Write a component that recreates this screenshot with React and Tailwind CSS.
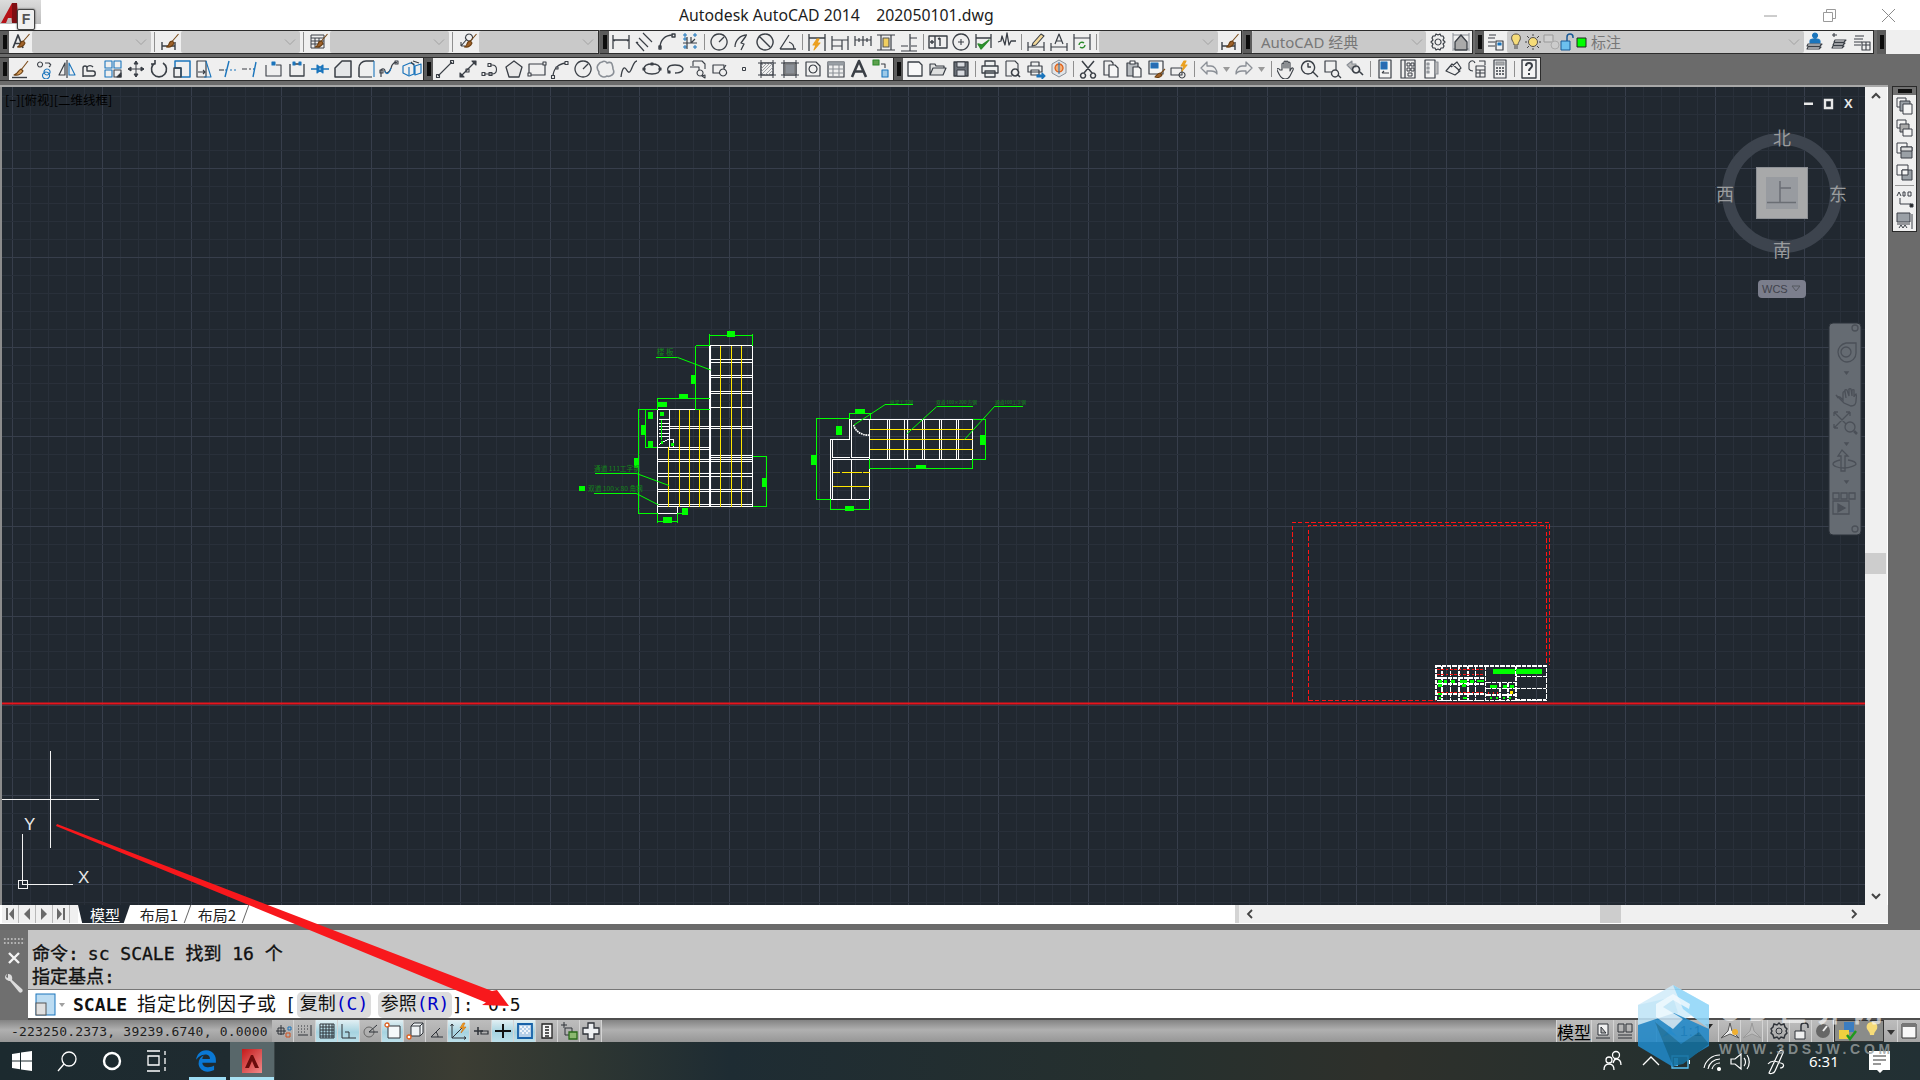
import React from 'react';
import { FaEdgeLegacy } from 'react-icons/fa6';

const K = '#3a3f46', B = '#1b75bc', O = '#e0651f', G = '#2b8a2b', Y = '#e8a020', N = '#8a8f96';
const BR = [['#7a4a18', 'M18.5 2l-6 7'], ['#6b3f12', 'M12.5 9c-2 0-3 1-3.500 3-.3 1.500-1 2-2.500 3 3 .5 6-.5 7.500-4z', '#a0622a']];
const ic = {
  textB: [[K, 'M2 16L7 3l5 13M4 11.500h6', null, 1.7], ...BR],
  dimB: [[K, 'M2 10v8M15 10v8M2 14h13', null, 1.4], ...BR],
  tableB: [[K, 'M2 3h13v13H2zM2 6h13M2 9h13M2 12h13M6 6v10M10 6v10', null, 1], ...BR],
  mlB: [[K, 'M11 2a3.500 3.500 0 1 0 .1 0M9 7L3 14M3 14v-4M3 14h4'], ...BR],
  match: [['#7a4a18', 'M17 2l-7 9'], ['#6b3f12', 'M10 10c-2 1-3 3-4 4-1 .8-2 1.500-3 2 3 .5 7-.5 9-4z', '#d9a05c'], [K, 'M1 18.500h15', null, 1.4]],
  copy2: [[K, 'M6 3a2.500 2.500 0 1 0 .1 0M11 4h4l2 2M15 8l2-2'], [B, 'M13 10a3 3 0 1 0 .1 0M12 13a3.500 3.500 0 1 0 .1 0']],
  mirror: [[K, 'M2 16L8 4v12zM10 1v18', null, 1.2], [B, 'M12 4l6 12h-6z']],
  offset: [[K, 'M3 18V9a2 2 0 0 1 4 0v3h6c3 0 3 5 0 5H3M7 10V8a4 4 0 0 1 6 0', null, 1.4]],
  array: [[B, 'M2 2h7v7H2zM11 2h7v7h-7zM2 11h7v7H2z'], [K, 'M11 11h7v7h-7z'], [K, 'M14 18l4-4v4z', '#222']],
  move: [[K, 'M10 2v16M2 10h16M10 2L8 5h4zM10 18l-2-3h4zM2 10l3-2v4zM18 10l-3-2v4z', '#3a3f46', 1]],
  rotate: [[K, 'M14 4a7.500 7.500 0 1 1-8 0M6 1v4H2', null, 1.6]],
  scale: [[B, 'M3 2h15v16H9V9H3z', null, 1.5], [K, 'M2 9h7v9H2z', null, 1.4]],
  stretch: [[K, 'M2 2h9v16H2z', null, 1.2], [B, 'M11 2l5 16H9'], [K, 'M3 13h7M8 11l2 2-2 2']],
  trim: [[K, 'M1 11h5'], [B, 'M7 11h2M12 11h2M16 11h2'], [B, 'M11 2L7 18', null, 1.4]],
  extend: [[K, 'M1 10h5M8 10h2'], [B, 'M15 3l-3 15M12 10h1', null, 1.4]],
  breakPt: [[K, 'M2 6v11h15V6h-5'], [B, 'M8 3h3v3H8z', '#1b75bc']],
  breakL: [[K, 'M3 5v12h14V5M8 5h4', null, 1.3], [B, 'M6 3h2v3H6zM12 3h2v3h-2z', '#1b75bc']],
  join: [[B, 'M1 10h6M13 10h6', null, 1.4], [B, 'M7 6l5 4-5 4zM13 6l-5 4 5 4z', '#1b75bc']],
  chamfer: [[K, 'M2 9v9h16V2h-9z', '#e4e6e8', 1.5]],
  fillet: [[K, 'M3 18V9a7 7 0 0 1 7-7h8', null, 1.5], [K, 'M3 18h13'], [B, 'M18 2v16']],
  blend: [[K, 'M2 18v-6c0-3 4-3 4 0 0 3 4 3 6-3 1-4 4-7 6-5', null, 1.2], [B, 'M6 12c1 5 5 2 6-3'], [K, 'M1 11h3v3H1zM16 2h3v3h-3z']],
  explode: [[B, 'M1 7l7-3 4 1v10l-5 2-6-3zM7 8v8M13 7l6-2v9l-6 2z', null, 1.2], [K, 'M9 3l3 3M11 2l6 2']],
  line: [[K, 'M3 17L17 3M1.500 15.500h3v3h-3zM15.500 1.500h3v3h-3z']],
  xline: [[K, 'M3 17L17 3', null, 1.2], [K, 'M14 2h4v4zM2 14v4h4z', '#3a3f46'], [K, 'M8 10h3v3H8z']],
  pline: [[K, 'M3 15h8c6 0 6-9 0-9H9M1 13.500h3v3H1zM8 13.500h3v3H8zM7 4.500h3v3H7z']],
  polygon: [[K, 'M10 2l8 6-3 10H5L2 8z', '#e8e8e8', 1.3]],
  rect: [[K, 'M2 5h16v11H2z', null, 1.2], [K, 'M1 14h3v3H1zM16 3h3v3h-3z', '#efefef']],
  arc: [[K, 'M3 18c0-8 5-13 13-14', null, 1.3], [K, 'M1.500 16.500h3v3h-3zM15 2.500h3v3h-3zM6 8h2v2H6z', '#efefef']],
  circle: [[K, 'M10 2a8 8 0 1 0 .1 0M10 10l5-5', null, 1.3]],
  cloud: [[N, 'M6 3c3-2 5 1 5 1s4-2 5 1 1 5 1 5 2 4-1 6-5 1-5 1-3 2-6 0-2-4-2-4-3-4-1-7 4-3 4-3z', null, 1.6]],
  spline: [[K, 'M2 18c1-8 3-11 5-8s3 5 5 1 3-9 6-9', null, 1.3]],
  ellipse: [[K, 'M10 5c-5 0-8 2-8 5s3 5 8 5 8-2 8-5-3-5-8-5z', null, 1.3], [K, 'M1 9h2v2H1zM17 9h2v2h-2zM9 4h2v2H9z', '#3a3f46']],
  ellarc: [[K, 'M5 14c-4-3-3-8 5-8s9 4 7 6-7 2-7 2', null, 1.3], [K, 'M3 12h2v2H3z', '#3a3f46']],
  insert: [[K, 'M5 2h9l3 3v5M5 2v5M2 8h9v6', null, 1.1], [K, 'M12 11a3 3 0 1 0 .1 0M14 17l3 2v-3z', '#efefef']],
  mkblock: [[K, 'M2 6h11v8H2z', null, 1.2], [K, 'M12 10a3.500 3.500 0 1 0 .1 0M13 9l2-3', '#efefef']],
  point: [[K, 'M8.500 8.500h3v3h-3z', null, 1]],
  hatch: [[K, 'M4 4h12v12H4zM1 4h18M1 16h18M4 1v18M16 1v18', null, 1], [N, 'M4 7l3-3M4 10l6-6M4 13l9-9M5 15l11-11M8 16l8-8M11 16l5-5', null, .8]],
  gradient: [[K, 'M4 4h12v12H4zM1 4h18M1 16h18M4 1v18M16 1v18', null, 1], ['#777', 'M5 5h10v10H5z', '#8a8f96']],
  region: [[K, 'M3 3h10l4 4v10H3z', '#f0f0f0', 1.2], [K, 'M10 6a4 4 0 1 0 .1 0', null, 1.2]],
  table: [[K, 'M2 3h16v15H2z', null, 1.2], [N, 'M2 3h16v3H2z', '#9aa0a6'], [N, 'M2 10h16M2 14h16M7 6v12M13 6v12']],
  textA: [[K, 'M3 18L10 2l7 16M5.500 12.500h9', null, 2.6]],
  addsel: [[G, 'M1 1h6v5H1z', '#5ea04e'], [K, 'M9 5h4v4'], [B, 'M10 11h6v7h-6z', '#9cc9e8']],
  new: [[K, 'M3 3h11l3 3v11H3z', '#f8f8f8', 1.3]],
  open: [[K, 'M2 16V5h5l1 2h8v2M2 16l3-7h13l-3 7z', '#dfe0e0', 1.2]],
  save: [[K, 'M3 3h14v14H3z', '#6a7078', 1.3], [K, 'M6 3h8v5H6zM6 11h8v6H6z', '#d8dbe0', 1]],
  plot: [[K, 'M5 7V2h10v5M2 7h16v7H2zM5 12h10v6H5z', '#eef0f0', 1.3]],
  preview: [[K, 'M3 2h9l3 3v6M3 2v15h6', null, 1.1], [K, 'M12 10a3.500 3.500 0 1 0 .1 0M14 15l3 3', null, 1.6]],
  publish: [[K, 'M5 7V3h8v4M2 7h14v6H2zM5 11h8v5H5z', '#eef0f0', 1.2], [B, 'M11 16h5v-2l3 3-3 3v-2h-5z', '#1b75bc']],
  model3d: [[N, 'M10 1l7 4v9l-7 4-7-4V5z', '#e0e4e8', 1], [O, 'M10 5a4 4 0 1 0 .1 0', '#f2b07a', 1.4], [B, 'M10 3v12', null, 1]],
  cut: [[K, 'M4 2l10 12M16 2L6 14M5 14a2.500 2.500 0 1 0 .1 0M15 14a2.500 2.500 0 1 0 .1 0', null, 1.5]],
  copy: [[K, 'M3 2h7l2 2v12H3z', '#efefef', 1.2], [K, 'M8 6h6l3 3v9H8z', '#f6f6f6', 1.2]],
  paste: [[K, 'M3 4h11v13H3z', '#b8bcc0', 1.2], [K, 'M6 2h5v3H6z', '#fff'], [K, 'M9 8h6l2 2v8H9z', '#f6f6f6', 1.2]],
  matchp: [[K, 'M2 2h14v13H2z', '#f4f4f4', 1.2], [B, 'M4 4h7v5H4z', '#2a6ab0'], ['#7a4a18', 'M18 10l-5 5'], ['#6b3f12', 'M13 14c-2 0-3 2-5 4 3 1 6 0 7-2z', '#a0622a']],
  blkedit: [[K, 'M1 9h11v7H1z', null, 1.1], [K, 'M12 13a3 3 0 1 0 .1 0'], [Y, 'M14 2l-3 5h3l-2 5 5-6h-3l2-4z', '#f0a020']],
  undo: [[N, 'M8 3L2 9l6 6v-3h4c3 0 5 1 6 3 0-5-3-8-6-8H8z', '#eee', 1.3]],
  redo: [[N, 'M12 3l6 6-6 6v-3H8c-3 0-5 1-6 3 0-5 3-8 6-8h4z', '#eee', 1.3]],
  pan: [[K, 'M5 11V5a1 1 0 0 1 2 0v4-6a1 1 0 0 1 2 0v6-6a1 1 0 0 1 2 0v6-5a1 1 0 0 1 2 0v8l1-2c1-2 3-1 2 1l-3 6c-1 2-3 3-5 3-4 0-5-3-6-5l-2-4c-.5-2 2-2 3 0z', '#efefef', 1.1]],
  zoomrt: [[K, 'M8 2a6.500 6.500 0 1 0 .1 0M8 4v4h3M13 13l5 5', null, 1.4]],
  zoomw: [[K, 'M2 2h11v11H2z', null, 1.2], [K, 'M12 11a3.500 3.500 0 1 0 .1 0M15 16l3 3', '#efefef', 1.3]],
  zoomp: [[N, 'M1 6l5-4v3h4v3H6v3z', '#bbb'], [K, 'M10 7a3.500 3.500 0 1 0 .1 0M13 12l4 4', null, 1.6]],
  props: [[K, 'M4 1h12v18H4z', '#f4f4f4', 1.2], [B, 'M6 3h6v7H6z', '#2a6ab0'], [K, 'M7 14h7M7 14l2-2'] ],
  dc: [[K, 'M3 1h14v18H3zM7 1v18', null, 1.2], [K, 'M9 4h3v3H9zM13 4h3v3h-3zM9 9h3v3H9zM13 9h3v3h-3zM10 14h4v3h-4z', null, 1]],
  palette: [[K, 'M4 1h10v18H4z', '#f4f4f4', 1.2], [N, 'M14 3h3v12h-3zM6 4h2v2H6zM6 8h2v2H6zM6 12h2v2H6z', '#bbb']],
  sheet: [[K, 'M2 12l6-7 8 7-5 4zM7 8l6-5 4 6-3 3', '#efefef', 1.2]],
  markup: [[K, 'M2 4c2-3 5-3 6 0M2 4v6c1 2 3 2 4 2M12 2h6v4', null, 1.1], [K, 'M9 7h9v11H9zM9 11h9M9 14h9M13 11v7', '#efefef', 1.1]],
  calc: [[K, 'M4 1h12v18H4z', '#efefef', 1.2], [N, 'M6 3h8v3H6z', '#aaa'], [K, 'M6 9h2M9 9h2M12 9h2M6 12h2M9 12h2M12 12h2M6 15h2M9 15h2M12 15h2', null, 1.3]],
  help: [[K, 'M3 1h14v18H3z', '#f4f4f4', 1.4], [K, 'M7 7c0-4 6-4 6 0 0 2-3 2-3 5M10 14v2', null, 2]],
  dimL: [[K, 'M2 3v14M18 3v14M2 8h16M2 8l2 1M18 8l-2 1', null, 1.3]],
  dimA: [[K, 'M9 1l9 9M2 10l8 9M5 6l9 9M3 10l1 1', null, 1.2]],
  dimArc: [[K, 'M3 16C3 8 8 3 16 3M2 14h2v3H2zM15 2h3v3h-3z', null, 1.4]],
  dimOrd: [[B, 'M4 2h2v2H4zM4 6h2v2H4zM4 14h2v2H4zM14 2h2v2h-2zM14 14h2v2h-2z', null, 1], [K, 'M7 5v12M3 11h14M11 5v6M15 7l-4 4', null, 1.2]],
  dimR: [[K, 'M10 2a8 8 0 1 0 .1 0M10 10l5-5', null, 1.3]],
  dimJ: [[K, 'M3 15a12 12 0 0 1 12-12M9 18l3-6-3-1 5-7', null, 1.3]],
  dimD: [[K, 'M10 2a8 8 0 1 0 .1 0M5 5l10 10', null, 1.4]],
  dimAng: [[K, 'M2 17h16M2 17L11 3M11 10c3 1 5 4 5 7', null, 1.3]],
  dimQ: [[K, 'M2 2v17M18 2v17M2 6h16', null, 1.3], [Y, 'M10 7l-4 6h3l-2 5 6-7h-3l2-4z', '#f0a020']],
  dimB2: [[K, 'M2 4v14M18 4v14M2 8h16M2 14h10M12 8v10', null, 1.2]],
  dimC: [[K, 'M2 4v10M10 4v10M18 4v10M2 8h16M6 6v4M14 6v4', null, 1.2]],
  dimS: [[K, 'M1 3h18M1 18h18M5 3v15M15 3v15', null, 1.2], ['#555', 'M7 6h6v9H7z', '#f2cf60']],
  dimBr: [[K, 'M2 14h7M12 14h6M11 2v17M11 6h7M2 19h16', null, 1.2]],
  tol: [[K, 'M1 4h18v12H1z', null, 1.4], [K, 'M7 4v12M4 8v4M2 10h4M12 6v8M10 7l2-1', null, 1.4]],
  center: [[K, 'M10 2a8 8 0 1 0 .1 0', null, 1.3], [K, 'M7 10h6M10 7v6']],
  inspect: [[K, 'M2 2v14M17 2v14M2 6h15', null, 1.3], [G, 'M4 12l3 5 8-9-7 5z', '#2a9a2a', 1.4]],
  jogL: [[K, 'M1 10l3-1 1-5 3 9 2-12 2 12 2-4 5 0', null, 1.3]],
  dimEd: [[K, 'M2 10v9M18 10v9M2 15h16', null, 1.2], [K, 'M7 11l8-9 3 2-8 9-4 1z', '#f2d89a']],
  dimTx: [[K, 'M2 11v8M18 11v8M2 15h16M6 12l4-10 4 10M7 9h6', null, 1.2]],
  dimUp: [[K, 'M2 2v16M18 2v16M2 6h16', null, 1.2], [G, 'M7 13a3 3 0 0 1 5-2M13 13a3 3 0 0 1-5 2', null, 1.4]],
  gear: [[K, 'M10 3l2-1 1 2 2 0 1 2-1 2 2 2-2 2 1 2-1 2-2 0-1 2-2-1-2 1-1-2-2 0-1-2 1-2-2-2 2-2-1-2 1-2 2 0 1-2zM10 7a3 3 0 1 0 .1 0', null, 1.2]],
  house: [[N, 'M2 1v18M18 1v18M2 3h16M2 17h16', null, 1], [K, 'M4 10l6-7 6 7v8H4z', '#aaa', 1.3]],
  layerP: [[K, 'M2 6h7M2 10h7M2 14h7M3 3h7', null, 1.2], [K, 'M10 9h7v9h-7z', '#efefef', 1.2], [B, 'M12 11h3v2h-3z', '#1b75bc']],
  layer1: [[B, 'M9 1a2.500 2.500 0 1 0 .1 0M4 9c0-3 10-3 10 0v2H4z', '#1b75bc'], [K, 'M2 12h14l-2 2H1zM2 15h13l-2 2H1z', '#fff', 1.1]],
  layer2: [[K, 'M6 8h11l-2 2H5zM5 11h11l-2 2H4zM4 14h11l-2 2H3zM3 3h5M5 1v4', '#fff', 1.1]],
  layer3: [[K, 'M3 4h9M2 7h9M2 10h8M2 13h7', null, 1.2], [K, 'M10 10h8v8h-8zM10 13h8M14 10v8', '#efefef', 1.1]],
};
function Ic({ n }) {
  return (
    <svg width="20" height="20" viewBox="0 0 20 20" fill="none" strokeLinejoin="round">
      {ic[n].map((p, i) => <path key={i} d={p[1]} stroke={p[0]} fill={p[2] || 'none'} strokeWidth={p[3] || 1.1} />)}
    </svg>
  );
}
const Cell = ({ n }) => <div className="w-[23px] h-full flex items-center justify-center shrink-0"><Ic n={n} /></div>;
const Grip = () => (
  <div className="w-[9px] h-full shrink-0 bg-[#5c5c5c] flex items-center justify-center">
    <div className="w-[4px] h-[14px] bg-[radial-gradient(#0c0c0c_1px,transparent_1px)] bg-[length:2px_2px]" />
  </div>
);
const Sep = () => <div className="w-[6px] h-full shrink-0 flex justify-center py-[3px]"><div className="w-px bg-[#8f8f8f]" /></div>;
const Sep7 = () => <div className="w-[7px] h-full shrink-0 flex justify-center py-[1px]"><div className="w-px bg-[#8f8f8f]" /></div>;
const Chev = () => (
  <svg width="12" height="8" viewBox="0 0 12 8" fill="none"><path d="M1 1.500l5 5 5-5" stroke="#a2a2a2" strokeWidth="1" /></svg>
);
const Combo = () => (
  <div className="w-[119px] h-full shrink-0 bg-[#c9c9c9] rounded-[2px] flex items-center justify-end pr-[4px]"><Chev /></div>
);
const Group = ({ children, className = '' }) => (
  <div className={`flex h-[24px] shrink-0 border border-[#2c2c2c] border-l-0 bg-[#efefef] ${className}`}>{children}</div>
);
const cells = (s) => s.split(' ').map((n, i) => <Cell key={i} n={n} />);
const Tri = () => <div className="w-[12px] h-full shrink-0 flex items-center justify-center"><svg width="7" height="5"><path d="M0 0h7L3.500 5z" fill="#9a9a9a" /></svg></div>;

function TitleBar() {
  return (
    <div className="relative h-[30px] bg-white flex items-center justify-between shrink-0">
      <div className="relative w-[41px] h-[24px] self-start bg-[linear-gradient(#dcdcdc,#bdbdbd)]">
        <svg width="30" height="24" viewBox="0 0 30 24" className="absolute left-0 top-0"><path d="M1 23L12 3h5l1 20h-6l-.5-5H8l-2 5z" fill="#b51218" /><path d="M12 3h5l1 20h-6z" fill="#7f0d12" /></svg>
        <div className="absolute left-[17px] top-[9px] w-[18px] h-[21px] bg-[#f0f0f0] border border-[#444] rounded-[2px] shadow-[0_0_2px_#333] text-[14px] leading-[19px] text-center text-[#555] font-['Liberation_Sans',sans-serif] font-bold">F</div>
      </div>
      <div className="absolute left-[679px] top-[5px] text-[15.800px] leading-[20px] text-[#1c1c1c] whitespace-pre font-['Noto_Sans',sans-serif]">Autodesk AutoCAD 2014    202050101.dwg</div>
      <div className="flex items-center pr-[25px] gap-[46px]">
        <svg width="13" height="13" viewBox="0 0 13 13"><path d="M0 7h13" stroke="#9a9a9a" /></svg>
        <svg width="13" height="13" viewBox="0 0 13 13" fill="none"><path d="M.5 3.500h9v9h-9zM3.500 3.500v-3h9v9h-3" stroke="#9a9a9a" /></svg>
        <svg width="13" height="13" viewBox="0 0 13 13"><path d="M0 0l13 13M13 0L0 13" stroke="#8a8a8a" /></svg>
      </div>
    </div>
  );
}

function Toolbars() {
  return (
    <div className="h-[55px] bg-[#6b6b6b] shrink-0 flex flex-col font-['Noto_Sans',sans-serif]">
      <div className="flex h-[24px]">
        <Group className="border-l-0">
          <Grip /><Cell n="textB" /><Combo /><Sep7 /><Cell n="dimB" /><Combo /><Sep7 /><Cell n="tableB" /><Combo /><Sep7 /><Cell n="mlB" /><Combo />
        </Group>
        <Group className="ml-[1px]">
          <Grip />{cells('dimL dimA dimArc dimOrd')}<Sep />{cells('dimR dimJ dimD dimAng')}<Sep />{cells('dimQ dimB2 dimC dimS dimBr')}<Sep />{cells('tol center inspect jogL')}<Sep />{cells('dimEd dimTx dimUp')}<Sep /><Combo /><Cell n="dimB" />
        </Group>
        <Group className="ml-[1px]">
          <Grip />
          <div className="w-[174px] h-full bg-[#c9c9c9] rounded-[2px] flex items-center justify-between pl-[9px] pr-[3px] text-[15px] text-[#777777] font-['Noto_Sans','Noto_Sans_CJK_SC',sans-serif]">AutoCAD 经典<Chev /></div>
          {cells('gear house')}
        </Group>
        <Group className="ml-[2px]">
          <Grip /><Cell n="layerP" />
          <div className="w-[297px] h-full bg-[#c9c9c9] rounded-[2px] flex items-center pr-[4px] text-[15px] text-[#777777] font-['Noto_Sans_CJK_SC',sans-serif]">
            <svg width="80" height="20" viewBox="0 0 80 20" fill="none" className="shrink-0">
              <path d="M9 2c4 0 5 3 4 6-1 2-2 3-2 5H7c0-2-1-3-2-5-1-3 0-6 4-6z" fill="#f6dc78" stroke="#55504a" />
              <path d="M7 14h4v3H7z" fill="#888" />
              <circle cx="26" cy="10" r="4.500" fill="#f6dc78" stroke="#55504a" />
              <path d="M26 2v2M26 16v2M18 10h2M32 10h2M20 4l2 2M30 14l2 2M32 4l-2 2M22 14l-2 2" stroke="#444" />
              <path d="M37 3h9v7h-9z" fill="#d0d0d0" stroke="#999" />
              <circle cx="48" cy="13" r="4" fill="#ccc" stroke="#aaa" />
              <path d="M54 9h9v9h-9z" fill="#6cc0ee" stroke="#1b5a96" />
              <path d="M60 9V5c0-4 6-4 6 0v1" stroke="#1b5a96" strokeWidth="1.500" />
              <path d="M70 6h9v9h-9z" fill="#00ff00" stroke="#222" />
            </svg>
            <span className="ml-[4px]">标注</span>
            <span className="ml-auto flex"><Chev /></span>
          </div>
          {cells('layer1 layer2 layer3')}
        </Group>
        <Group className="ml-[3px] flex-1 min-w-0 border-y-0 border-r-0"><Grip /></Group>
      </div>
      <div className="flex h-[24px] mt-[3px]">
        <Group><Grip />{cells('match copy2 mirror offset array move rotate scale stretch trim extend breakPt breakL join chamfer fillet blend explode')}</Group>
        <Group><Grip />{cells('line xline pline polygon rect arc circle cloud spline ellipse ellarc insert mkblock point hatch gradient region table textA addsel')}</Group>
        <Group>
          <Grip />{cells('new open save')}<Sep />{cells('plot preview publish model3d')}<Sep />{cells('cut copy paste matchp blkedit')}<Sep />
          <Cell n="undo" /><Tri /><Cell n="redo" /><Tri /><div className="w-[8px] h-full flex justify-center py-[3px]"><div className="w-px bg-[#8f8f8f]" /></div>
          {cells('pan zoomrt zoomw zoomp')}<Sep />{cells('props dc palette sheet markup calc')}<Sep /><Cell n="help" />
        </Group>
      </div>
    </div>
  );
}

const gx = Array.from({ length: 120 }, (_, i) => 1356.3 + (i - 80) * 17.92);
const gy = Array.from({ length: 80 }, (_, i) => 526 + (i - 40) * 17.92);

function Drawing() {
  const W = '#ffffff', GR = '#00ff00', YE = '#ffe600';
  const dbl = (x1, x2, ys) => ys.map((y) => `M${x1} ${y}H${x2}`).join('');
  return (
    <g transform="translate(560 310) scale(.33333)" shapeRendering="crispEdges" fill="none" strokeWidth="3">
      <path stroke={W} d={'M450 108H577V590H292V300H450M450 108V590M452 108V590M328 300V412M292 412H450M292 610H352V590M292 590V610' + dbl(450, 577, [150, 157, 198, 204, 246, 252, 294, 349, 356, 438, 442]) + dbl(292, 577, [448, 456, 492, 500, 538, 546, 583]) + dbl(328, 450, [349, 356, 418])} />
      <path stroke={YE} d="M481 108V590M514 108V590M544 108V590M358 300V590M388 300V590M418 300V590M325 412V590" />
      <path stroke={W} d="M296 330H326M296 340H326M296 350H326M296 360H326M296 370H326M296 380H326M296 405L320 390M320 388H342V410" strokeWidth="3" />
      <path stroke={GR} d="M450 76H578M450 72V108M578 72V108M407 108V300M407 108H450M407 300H450M292 265H450M292 265V300M235 300V610M235 300H292M235 610H292M256 300V412M256 300H292M256 412H292M578 440H620V590H578M292 634H352M292 610V638M352 610V638M352 610H372M105 490H228M102 550H228M288 142H352M306 330V390" />
      <path stroke={GR} shapeRendering="auto" d="M228 490L328 527M228 550L296 585M352 142L452 180" />
      <g fill={GR}>
        <rect x="500" y="64" width="26" height="16" /><rect x="393" y="195" width="13" height="26" /><rect x="358" y="252" width="26" height="13" /><rect x="294" y="276" width="28" height="15" /><rect x="264" y="305" width="15" height="22" /><rect x="244" y="345" width="13" height="30" /><rect x="264" y="392" width="16" height="22" /><rect x="222" y="444" width="14" height="30" /><rect x="606" y="504" width="13" height="26" /><rect x="310" y="622" width="26" height="16" /><rect x="367" y="594" width="17" height="20" /><rect x="57" y="528" width="18" height="15" /><rect x="300" y="306" width="12" height="12" /><rect x="303" y="393" width="6" height="10" /><rect x="333" y="399" width="8" height="10" />
      </g>
      <g fill="#13881a" fontSize="23" fontFamily="'Noto Sans CJK SC',sans-serif" stroke="none" shapeRendering="auto">
        <text x="290" y="136">楼 板</text><text x="102" y="484" fontSize="20">通道 111工字钢</text><text x="84" y="542" fontSize="20">双道 100×80 角钢</text>
        <text x="990" y="282" fontSize="14">纵梁工字钢</text><text x="1128" y="282" fontSize="14">双道 100×200 方钢</text><text x="1305" y="283" fontSize="14">通道100工字钢</text>
      </g>
      <path stroke={W} d="M930 328H1238V448H930zM982 328V448M990 328V448M1034 328V448M1042 328V448M1088 328V448M1094 328V448M1139 328V448M1144 328V448M1190 328V448M1196 328V448M876 328H930M876 328V443H930M811 388H870V328H876M811 388V568H930V448H817M817 448V568M817 388V443H870M876 448V568M811 568H817" />
      <path stroke={YE} d="M930 358H1238M930 388H1238M930 418H1238M820 487H840M845 487H905M910 487H930M820 529H930" />
      <path stroke={W} strokeWidth="5" strokeDasharray="5 2" shapeRendering="auto" d="M881 345c3 15 20 32 46 30" />
      <path stroke={GR} d="M769 326V568M769 326H870M769 568H811M868 310H932M868 310V328M932 310V328M930 475H1238M930 448V478M1238 448V478M811 598H930M811 568V601M928 568V601M1238 328H1277V448H1238M975 284H1060M1130 290H1240M1303 290H1390" />
      <path stroke={GR} shapeRendering="auto" d="M882 345L975 284M1040 372L1130 290M1214 388L1303 290" />
      <g fill={GR}>
        <rect x="753" y="436" width="15" height="28" /><rect x="828" y="348" width="17" height="28" /><rect x="886" y="298" width="28" height="14" /><rect x="1068" y="464" width="30" height="14" /><rect x="1261" y="376" width="15" height="28" /><rect x="856" y="589" width="26" height="14" />
      </g>
    </g>
  );
}

function TitleBlock() {
  const W = '#ffffff', R = '#ff1414', GR = '#00ff00';
  return (
    <g transform="translate(1280 510) scale(.33333)" fill="none" shapeRendering="crispEdges">
      <path stroke={R} strokeWidth="3.200" strokeDasharray="13 7" d="M37 580V37H808V466M85 572V46H800V466M85 572H467" />
      <g stroke={W} strokeWidth="5" strokeDasharray="13 3">
        <path d="M469 468H800V572H469zM617 468V572M708 468V572M708 500H798M708 536H798M708 570H798M619 518H706M619 536H706M619 555H706M471 505H617M471 522H617M471 552H617M471 572H617M487 468V572M512 468V572M537 468V572M565 468V572M587 468V572M660 518V572M685 518V572" />
      </g>
      <g fill={GR}>
        <rect x="640" y="477" width="65" height="15" /><rect x="709" y="477" width="77" height="15" /><rect x="630" y="526" width="22" height="8" /><rect x="668" y="526" width="14" height="8" /><rect x="690" y="526" width="12" height="8" /><rect x="474" y="511" width="12" height="8" /><rect x="492" y="511" width="10" height="8" /><rect x="514" y="511" width="12" height="8" /><rect x="540" y="511" width="22" height="7" /><rect x="570" y="511" width="12" height="8" /><rect x="592" y="511" width="20" height="6" /><rect x="474" y="522" width="12" height="8" /><rect x="545" y="522" width="14" height="8" /><rect x="474" y="548" width="12" height="7" /><rect x="476" y="562" width="8" height="6" /><rect x="548" y="562" width="12" height="6" /><rect x="630" y="560" width="6" height="7" /><rect x="648" y="560" width="6" height="7" /><rect x="670" y="560" width="6" height="7" /><rect x="688" y="560" width="6" height="7" />
      </g>
      <path stroke={R} strokeWidth="3" strokeDasharray="8 5" d="M471 480H615M471 493H615M471 547H615M626 545V556M640 545V556M652 545V556" />
      <rect x="690" y="544" width="8" height="8" fill="#ffe600" />
    </g>
  );
}

function Canvas() {
  return (
    <div className="relative flex-1 min-w-0 h-full bg-[#212830] overflow-hidden border-l-2 border-[#8c8c8c]">
      <svg className="absolute left-[-2px] top-0" width="1865" height="818" viewBox="0 87 1865 818" fontFamily="'Noto Sans CJK SC',sans-serif">
        <g shapeRendering="crispEdges" strokeWidth="1">
          {gx.map((x, i) => <path key={i} d={`M${Math.round(x) + .5} 87V905`} stroke={(i % 5) === 0 ? '#373e4b' : '#29303a'} />)}
          {gy.map((y, i) => <path key={i} d={`M0 ${Math.round(y) + .5}H1865`} stroke={(i % 5) === 0 ? '#373e4b' : '#29303a'} />)}
        </g>
        <Drawing />
        <TitleBlock />
        <path d="M2 703.500H1865" stroke="#e8141c" strokeWidth="2" />
        <g shapeRendering="crispEdges" stroke="#f2f2f2" fill="none">
          <path d="M2 799.500H99M50.500 751V848M22.500 834V880M27 884.500H73M18.500 880.500h9v8h-9zM22.500 880.500v4h5" />
        </g>
        <text x="24" y="830" fontSize="17" fill="#e8e8e8" fontFamily="'Liberation Sans',sans-serif">Y</text>
        <text x="78" y="883" fontSize="17" fill="#e8e8e8" fontFamily="'Liberation Sans',sans-serif">X</text>
        {/* viewport controls */}
        <path d="M1804 102.500h9v2.500h-9z" fill="#e8e8e8" />
        <path d="M1825 100h7v8h-7z" fill="none" stroke="#e8e8e8" strokeWidth="2.400" />
        <text x="1844" y="108" fontSize="13" fontWeight="700" fill="#e8e8e8" fontFamily="'Liberation Sans',sans-serif">X</text>
        {/* view cube */}
        <circle cx="1782" cy="193" r="54" fill="none" stroke="#3d444e" strokeWidth="12" />
        <rect x="1756.500" y="167.500" width="51" height="51" fill="#a8a9aa" stroke="#8e9196" />
        <rect x="1766" y="177" width="32" height="32" fill="#989ba0" />
        <path d="M1780 181v21M1767 202.500h29M1780 188h11" stroke="#6a6e74" strokeWidth="1.500" fill="none" />
        <g fontSize="18" fill="#9a9c9e" textAnchor="middle">
          <text x="1782" y="145">北</text><text x="1782" y="257">南</text><text x="1725" y="201">西</text><text x="1838" y="201">东</text>
        </g>
        <rect x="1758" y="280" width="48" height="18" rx="4" fill="#7b7e8c" />
        <text x="1762" y="293" fontSize="11" fill="#3f424b" fontFamily="'Liberation Sans',sans-serif">WCS</text>
        <path d="M1792 286h8l-4 5z" fill="none" stroke="#55585f" />
        {/* nav bar */}
        <rect x="1829" y="323" width="32" height="212" rx="4" fill="#656b72" stroke="#2c323a" />
        <g fill="none" stroke="#4b5058" strokeWidth="1.300">
          <circle cx="1855" cy="328" r="3" />
          <circle cx="1855" cy="529" r="3" />
          <path d="M1838 352c0-4 3-8 8-9h10c0 0 0 3 0 10 0 5-4 9-9 9s-9-5-9-10z" />
          <circle cx="1846" cy="352" r="5" />
          <path d="M1848 372l-3 0 1.500 2zM1848 443l-3 0 1.500 2zM1848 481l-3 0 1.500 2z" fill="#4b5058" />
          <path d="M1836 395l8 8 7 3c3 0 5-2 5-5 0-3 1-5 0-7-1 1-2 2-2 3l0-7c-1-1-2 0-2 1v5l-1-7c-1-1-3 0-2 1v6l-2-6c-1-1-3 0-2 1l1 7-1-6c-1-1-2 0-2 1v7l-3-3c-2-1-3 0-2 1z" />
          <path d="M1834 412l16 16M1850 412l-16 16M1834 412h4M1834 412v4M1850 412h-4M1850 412v4M1834 428h4M1834 428v-4" />
          <circle cx="1850" cy="427" r="5" fill="#656b72" />
          <path d="M1854 431l3 3" strokeWidth="2.500" />
          <path d="M1842 450l-4 6h3v15h4v-15h3z" />
          <path d="M1848 460c6 1 8 3 8 4s-6 4-12 4-11-2-11-4 3-3 7-4" />
          <path d="M1833 493h6v6h-6zM1841 493h6v6h-6zM1849 493h6v6h-6zM1833 501h16v13h-16z" />
          <path d="M1838 504l7 4-7 4z" fill="#4b5058" />
        </g>
      </svg>
      <div className="absolute left-[3px] top-[5px] text-[12.500px] leading-[16px] text-black font-['Noto_Sans_CJK_SC',sans-serif] whitespace-nowrap">[−][俯视][二维线框]</div>
    </div>
  );
}

function VScroll() {
  return (
    <div className="w-[23px] h-full bg-[#f0f0f0] shrink-0 border-r border-[#ffffff] flex flex-col items-center justify-between py-[5px] relative">
      <svg width="10" height="7" viewBox="0 0 10 7" fill="none"><path d="M1 6l4-4 4 4" stroke="#444" strokeWidth="2" /></svg>
      <div className="absolute left-0 top-[466px] w-[21px] h-[21px] bg-[#cdcdcd]" />
      <svg width="10" height="7" viewBox="0 0 10 7" fill="none"><path d="M1 1l4 4 4-4" stroke="#444" strokeWidth="2" /></svg>
    </div>
  );
}

function Dock() {
  const list = [
    [[K, 'M2 2h9v9H2z', '#f4f4f4'], [K, 'M5 5h10v10H5z', '#9aa0a6'], [K, 'M8 8h9v10H8z', '#f4f4f4']],
    [[K, 'M2 2h9v8H2z', '#f4f4f4'], [K, 'M5 6h9v8H5z', '#aaa'], [K, 'M8 11h9v7H8z', '#f4f4f4']],
    [[K, 'M2 3h10v10H2z', '#f4f4f4'], [K, 'M6 7h11v11H6z', '#9aa0a6'], [K, 'M6 7h11v4H6z', '#ddd']],
    [[K, 'M2 3h11v10H2z', '#f4f4f4'], [K, 'M7 8h10v10H7z', '#9aa0a6'], [K, 'M7 8h6v5H7z', '#f4f4f4']],
    [[K, 'M2 7l2-4 2 4M8 3h2v4H8zM13 3h3v4h-3zM5 9v6h11', null], [K, 'M15 15h3v3h-3z', '#222']],
    [[K, 'M2 2h13v9H2z', '#9aa0a6'], [K, 'M2 13h13M17 3v15M4 17l2-3 2 3 2-3 2 3', null]],
  ];
  const Item = ({ p }) => (
    <svg width="20" height="20" viewBox="0 0 20 20" fill="none">{p.map((q, i) => <path key={i} d={q[1]} stroke={q[0]} fill={q[2] || 'none'} />)}</svg>
  );
  return (
    <div className="w-[32px] h-full bg-[#6b6b6b] shrink-0 pt-[1px] pl-[4px]">
      <div className="w-[25px] h-[146px] border border-[#2a2a2a] bg-[#efefef] flex flex-col items-center">
        <div className="w-full h-[8px] bg-[#707070] flex justify-center items-center"><div className="w-[14px] h-[4px] bg-[radial-gradient(#111_1px,transparent_1px)] bg-[length:2px_2px]" /></div>
        <div className="flex flex-col gap-[2px] pt-[1px]">
          {list.slice(0, 4).map((p, i) => <Item key={i} p={p} />)}
        </div>
        <div className="w-[19px] h-px bg-[#999] my-[3px]" />
        <div className="flex flex-col gap-[2px]">
          {list.slice(4).map((p, i) => <Item key={i} p={p} />)}
        </div>
      </div>
    </div>
  );
}

function TabBar() {
  const NavI = ({ d }) => <div className="w-[17px] h-full border-r border-[#b8b8b8] flex items-center justify-center"><svg width="10" height="12" viewBox="0 0 10 12"><path d={d} fill="#6a6a6a" /></svg></div>;
  return (
    <div className="h-[19px] flex bg-[#f0f0f0] border-b border-[#ffffff] shrink-0 font-['Noto_Sans_CJK_SC',sans-serif] text-[15px] leading-[19px]">
      <div className="flex w-[1235px] bg-white shrink-0">
        <div className="flex ml-[2px] w-[76px] bg-[#f0f0f0]">
          <NavI d="M1 0h2v12H1zM9 0v12L4 6z" /><NavI d="M8 0v12L2 6z" /><NavI d="M2 0v12l6-6z" /><NavI d="M9 0h-2v12h2zM1 0v12l5-6z" />
        </div>
        <div className="w-[52px] h-full bg-[#1f2730] text-white text-center pl-[2px] [clip-path:polygon(0_0,100%_0,88%_100%,8%_100%)]">模型</div>
        <div className="relative w-[58px] text-[#222] text-center">布局1<div className="absolute right-0 top-0 h-full w-px bg-[#666] -skew-x-[20deg]" /></div>
        <div className="relative w-[58px] text-[#222] text-center">布局2<div className="absolute right-0 top-0 h-full w-px bg-[#666] -skew-x-[20deg]" /></div>
      </div>
      <div className="flex-1 relative flex items-center justify-between pl-[7px] pr-[7px] border-l-4 border-[#d4d4d4]">
        <svg width="7" height="10" viewBox="0 0 7 10" fill="none"><path d="M6 1L2 5l4 4" stroke="#444" strokeWidth="1.800" /></svg>
        <div className="absolute left-[361px] top-0 w-[21px] h-[18px] bg-[#cdcdcd]" />
        <svg width="7" height="10" viewBox="0 0 7 10" fill="none" className="mr-[23px]"><path d="M1 1l4 4-4 4" stroke="#444" strokeWidth="1.800" /></svg>
      </div>
    </div>
  );
}

function Command() {
  const mono = "font-['DejaVu_Sans_Mono','Noto_Sans_CJK_SC',monospace]";
  return (
    <div className={`h-[90px] flex shrink-0 bg-[#c6c6c6] text-[#111] ${mono}`}>
      <div className="w-[28px] h-full bg-[#6f6f6f] flex flex-col items-center shrink-0">
        <div className="w-[22px] h-[8px] mt-[7px] bg-[radial-gradient(#b4b4b4_1px,transparent_1px)] bg-[length:3.500px_4px]" />
        <svg width="12" height="12" viewBox="0 0 12 12" className="mt-[7px]"><path d="M1 1l10 10M11 1L1 11" stroke="#f4f4f4" strokeWidth="2.400" /></svg>
        <svg width="20" height="22" viewBox="0 0 20 22" className="mt-[9px]" fill="#dcdcdc"><path d="M3 1c-3 2-2 5 0 6 1 1 3 1 3 1l9 11c2 2 5-1 3-3L8 7s1-3-1-5C6 1 5 1 4 1v4L2 4z" /></svg>
      </div>
      <div className="flex-1 min-w-0 flex flex-col">
        <div className="h-[60px] pl-[4px] pt-[12px] text-[18px] leading-[23px] whitespace-pre border-b border-[#777] [-webkit-text-stroke:0.35px_#111]">
          <div className="flex items-center h-[23px]"><span className="mr-[1px]">命令:</span><span className="ml-[8px]">sc SCALE 找到 16 个</span></div>
          <div className="h-[23px] flex items-center">指定基点:</div>
        </div>
        <div className="h-[28px] bg-white flex items-center relative whitespace-pre text-[18px] pt-[1px]">
          <svg width="30" height="24" viewBox="0 0 30 24" className="ml-[7px] shrink-0">
            <rect x="1" y="1" width="19" height="21" fill="#bcdcf2" stroke="#1b75bc" />
            <rect x="1" y="10" width="10" height="12" fill="#e0e0e0" stroke="#555" />
            <path d="M24 10h6l-3 4z" fill="#a0a0a0" />
          </svg>
          <span className="ml-[8px] font-bold w-[64px]">SCALE</span>
          <span className="text-[19px] w-[148px] tracking-[1px]">指定比例因子或</span>
          <span className="w-[12px]">[</span>
          <span className="w-[74px] h-[26px] rounded-[5px] bg-[#dcdcdc] text-center leading-[24px] text-[18px]">复制<span className="text-[#0000c8]">(C)</span></span>
          <span className="w-[74px] h-[26px] ml-[7px] rounded-[5px] bg-[#dcdcdc] text-center leading-[24px] text-[18px]">参照<span className="text-[#0000c8]">(R)</span></span>
          <span className="w-[36px]">]:</span>
          <span>0.5</span>
        </div>
        <div className="h-[2px] bg-[#4e4e4e]" />
      </div>
    </div>
  );
}

const St = ({ active, children }) => (
  <div className={`w-[22px] h-full shrink-0 border-r border-[#d4d4d4] flex items-center justify-center ${active ? 'bg-[linear-gradient(#e2eff3,#a6d3e0_55%,#bde0ea)]' : 'bg-[linear-gradient(#bdbdbd,#a6a6a6)]'}`}>
    <svg width="20" height="20" viewBox="0 0 20 20" fill="none" stroke="#2e3238">{children}</svg>
  </div>
);
function Status() {
  return (
    <div className="h-[22px] flex shrink-0 bg-[linear-gradient(#838383,#b0b0b0_45%,#969696)]">
      <div className="w-[272px] shrink-0 h-full pl-[11px] text-[13px] leading-[24px] tracking-[0.2px] text-[#1d1d1d] whitespace-pre font-['DejaVu_Sans_Mono',monospace]">-223250.2373, 39239.6740, 0.0000</div>
      <St><path d="M3 10h10M8 4v10M5 7h6v6H5z" /><path d="M13 12h4v4h-4z" stroke="#d0501e" /><path d="M15 6h3v3h-3z" stroke="#1b75bc" /></St>
      <St><path d="M3 5h1M6 5h1M9 5h1M12 5h1M3 8h1M6 8h1M9 8h1M12 8h1M3 11h1M6 11h1M9 11h1M3 14h10M16 4v11" /></St>
      <St active><path d="M3 3h14v14H3zM6 3v14M9 3v14M12 3v14M15 3v14M3 6h14M3 9h14M3 12h14M3 15h14" /></St>
      <St active><path d="M3 3v14h14M6 11h4v6" /></St>
      <St><circle cx="8" cy="11" r="5" stroke="#666" /><path d="M8 11l8-7M8 11h9" /></St>
      <St active><path d="M5 5h12v12H5z" fill="#f4f8fa" /><circle cx="4" cy="4" r="2" stroke="#e0601e" fill="#fff" strokeWidth="1.300" /></St>
      <St><path d="M6 5l3-3h9v10l-3 3H6zM6 5h9v10M15 5l3-3" fill="#eef2f4" /><circle cx="4" cy="16" r="2" stroke="#e0601e" fill="#fff" strokeWidth="1.300" /></St>
      <St><path d="M4 16h12M4 16l9-9M9 11c1 1 2 3 2 5" /></St>
      <St active><path d="M3 3v14h14M3 17l10-10M3 3l-1.500 2M3 3l1.500 2M17 17l-2-1.500M17 17l-2 1.500" /><path d="M14 2l-3 5h3l-2 5 5-6h-3l2-4z" fill="#f0a020" stroke="#c96a10" strokeWidth=".6" /></St>
      <St><path d="M3 10h9M7 6v8" strokeWidth="1.500" /><path d="M10 10h7v3h-7z" strokeWidth="1.200" /></St>
      <St active><path d="M2 10h16M10 3v14" stroke="#111" strokeWidth="2" /></St>
      <St active><path d="M3 3h14v14H3z" fill="#b4cfe8" stroke="#1661a8" strokeWidth="1.800" /><path d="M5 5h2v2H5zM9 5h2v2H9zM13 5h2v2h-2zM7 7h2v2H7zM11 7h2v2h-2zM5 9h2v2H5zM9 9h2v2H9zM13 9h2v2h-2zM7 11h2v2H7zM11 11h2v2h-2z" fill="#eef4fa" stroke="none" /></St>
      <St><path d="M5 3h10v14H5z" fill="#f4f4f4" stroke="#222" strokeWidth="1.300" /><path d="M8 6h4M8 9h4M8 12h4M8 15h4" stroke="#222" strokeWidth="1.300" /></St>
      <St><path d="M2 4h6M5 1v6M6 7h7v7H6z" /><path d="M10 11h8v7h-8z" fill="#8bb870" stroke="#2a6a1a" strokeWidth="1.300" /></St>
      <St><path d="M7 2h6v5h5v6h-5v5H7v-5H2V7h5z" fill="#eef0f2" strokeWidth="1.300" /></St>
      <div className="flex-1" />
      <div className="w-[36px] h-full bg-[linear-gradient(#bdbdbd,#a6a6a6)] border-x border-[#d4d4d4] text-[17px] leading-[24px] text-center text-black font-['Noto_Sans_CJK_SC',sans-serif] shrink-0">模型</div>
      <St><path d="M5 3h10v11H5zM3 17h14M8 6v6h5z" fill="#f0f0f0" /></St>
      <St><path d="M3 3h6v8H3zM11 3h6v8h-6zM3 14h14M3 17h14" /></St>
      <div className="w-[21px] shrink-0 border-r border-[#d4d4d4] bg-[linear-gradient(#bdbdbd,#a6a6a6)]" />
      <div className="w-[62px] h-full shrink-0 bg-[linear-gradient(#bdbdbd,#a6a6a6)] border-r border-[#d4d4d4] flex items-center pl-[4px] text-[14px] text-[#1b3a55] font-['Liberation_Sans',sans-serif]">
        <svg width="18" height="20" viewBox="0 0 20 20"><path d="M10 2l2 8 7 7-9-4-9 4 7-7z" fill="#5a9ed4" /></svg>
        <span className="ml-[1px] tracking-[1px]">1:1</span>
        <svg width="8" height="6" className="ml-[3px] -mt-[8px]"><path d="M0 0h8L4 5z" fill="#222" /></svg>
      </div>
      <St><path d="M10 2l2 8 7 7-9-4-9 4 7-7z" fill="#eee" stroke="#555" /><circle cx="15" cy="11" r="3" fill="#f0b030" stroke="none" /></St>
      <St><path d="M10 2l2 8 7 7-9-4-9 4 7-7z" fill="#bbb" stroke="#999" /></St>
      <div className="w-[5px] shrink-0 bg-[linear-gradient(#bdbdbd,#a6a6a6)] border-r border-[#d4d4d4]" />
      <St><circle cx="10" cy="10" r="3" /><path d="M10 2l2 2 3-1 1 3 2 2-1 2 1 2-2 2-1 3-3-1-2 2-2-2-3 1-1-3-2-2 1-2-1-2 2-2 1-3 3 1z" strokeWidth="1.400" /></St>
      <St><path d="M4 10h10v8H4z" fill="#eee" /><path d="M10 10V5c0-4 7-4 7 0v2" strokeWidth="1.500" /></St>
      <St><circle cx="10" cy="10" r="7" fill="#666" stroke="none" /><path d="M10 10l4-5" stroke="#eee" strokeWidth="2" /></St>
      <div className="h-full w-[50px] shrink-0 bg-[#8a8c8a] border border-[#333] flex items-center justify-around">
        <svg width="20" height="20" viewBox="0 0 20 20"><path d="M6 1h10v10H6z" fill="#3b7dc0" /><path d="M1 9h10v9H1z" fill="#f0d040" /><path d="M9 14l3 4 6-8" fill="none" stroke="#1e9a1e" strokeWidth="2.400" /></svg>
        <svg width="16" height="20" viewBox="0 0 16 20"><path d="M8 1c5 0 6 4 5 7-1 2-3 3-3 6H6c0-3-2-4-3-6-1-3 0-7 5-7z" fill="#f6dc78" /><path d="M6 15h4v3H6z" fill="#888" /></svg>
      </div>
      <div className="w-[13px] shrink-0 flex items-center justify-center pt-[4px] bg-[linear-gradient(#bdbdbd,#a6a6a6)]"><svg width="8" height="6"><path d="M0 0h8L4 5z" fill="#333" /></svg></div>
      <div className="w-[23px] shrink-0 h-full bg-[linear-gradient(#bdbdbd,#a6a6a6)] border-l border-[#d4d4d4] flex items-center justify-center">
        <svg width="18" height="18" viewBox="0 0 18 18"><path d="M2 2h14v14H2z" fill="#f8f8f8" stroke="#333" /><path d="M2 2h14v3H2z" fill="#777" /></svg>
      </div>
    </div>
  );
}

function Taskbar() {
  return (
    <div className="h-[38px] shrink-0 relative flex items-center bg-[linear-gradient(to_right,#1c2a2f,#1f2b30_12%,#3c3d33_24%,#2f3732_30%,#1e2c33_38%,#26302e_60%,#2e302b_72%,#25302f_88%,#223034)] font-['Noto_Sans',sans-serif] text-white">
      <div className="w-[44px] flex justify-center">
        <svg width="20" height="20" viewBox="0 0 20 20" fill="#fff"><path d="M0 3l8-1.200V9.500H0zM9 1.600L20 0v9.500H9zM0 10.500h8v7.700L0 17zM9 10.500h11V20L9 18.400z" /></svg>
      </div>
      <div className="w-[45px] flex justify-center">
        <svg width="22" height="22" viewBox="0 0 22 22" fill="none" stroke="#fff" strokeWidth="1.300"><circle cx="13" cy="9" r="7" /><path d="M8 14l-6 7" /></svg>
      </div>
      <div className="w-[45px] flex justify-center">
        <svg width="20" height="20" viewBox="0 0 20 20" fill="none" stroke="#fff" strokeWidth="2.400"><circle cx="10" cy="10" r="8" /></svg>
      </div>
      <div className="w-[45px] flex justify-center">
        <svg width="22" height="22" viewBox="0 0 22 22" fill="none" stroke="#fff" strokeWidth="1.300"><path d="M1 1h13M1 21h13M2 6h11v9H2zM19 1v4M19 8v6M19 17v4" /></svg>
      </div>
      <div className="relative w-[41px] h-full flex items-center justify-center ml-[6px]">
        <FaEdgeLegacy size={22} color="#0a78d4" />
        <div className="absolute left-[4px] right-0 bottom-0 h-[3px] bg-[#9cdcf4]" />
      </div>
      <div className="relative w-[45px] h-full bg-[#58676a] ml-[4px] flex items-center justify-center border-r border-[#3a4446]">
        <div className="w-[20px] h-[24px] bg-[linear-gradient(135deg,#c41a1a,#f08a8a)] flex items-center justify-center">
          <svg width="16" height="16" viewBox="0 0 16 16"><path d="M1 15L7 2h2l6 13h-4L8 8l-3 7z" fill="#6a0c0c" /></svg>
        </div>
        <div className="absolute left-0 right-0 bottom-0 h-[3px] bg-[#a9e3f5]" />
      </div>
      <div className="ml-auto flex items-center h-full relative w-[320px]">
        <svg className="absolute left-[1px] top-[7px]" width="24" height="24" viewBox="0 0 24 24" fill="none" stroke="#fff" strokeWidth="1.300"><circle cx="15" cy="6" r="3.500" /><circle cx="8" cy="11" r="3" /><path d="M3 21c0-4 2-6 5-6s5 2 5 6M12 14c1-3 2-4 3-4 3 0 5 2 5 6" /></svg>
        <svg className="absolute left-[42px] top-[13px]" width="18" height="11" viewBox="0 0 18 11" fill="none" stroke="#fff" strokeWidth="1.300"><path d="M1 10l8-8 8 8" /></svg>
        <svg className="absolute left-[71px] top-[8px]" width="20" height="24" viewBox="0 0 20 24" fill="none"><path d="M1 6h16v12H1z" stroke="#5cc4f6" strokeWidth="1.300" /><path d="M3 8h4v8H3z" fill="#5cc4f6" /><path d="M18.500 10v4" stroke="#fff" /></svg>
        <svg className="absolute left-[102px] top-[8px]" width="22" height="24" viewBox="0 0 22 24" fill="none" stroke="#fff" strokeWidth="1.100"><path d="M2 18a16 16 0 0 1 16-13M6 19a12 12 0 0 1 12-10M10 19a8 8 0 0 1 8-6" /><circle cx="17" cy="19" r="1.500" fill="#fff" /></svg>
        <svg className="absolute left-[130px] top-[8px]" width="22" height="24" viewBox="0 0 22 24" fill="none" stroke="#fff" strokeWidth="1.200"><path d="M1 9h4l6-5v15l-6-5H1zM14 8c2 2 2 6 0 8M17 5c3 4 3 10 0 14" /></svg>
        <svg className="absolute left-[165px] top-[7px]" width="22" height="26" viewBox="0 0 22 26" fill="none" stroke="#fff" strokeWidth="1.200"><path d="M4 24L14 3c2-3 5-1 4 1l-8 18c-1 3-6 3-6 2zM3 15c3-4 7-3 13-1 4 1 3 5-1 5" /></svg>
        <div className="absolute left-[209px] top-[12px] text-[15px] leading-[15px]">6:31</div>
        <svg className="absolute left-[269px] top-[9px]" width="21" height="24" viewBox="0 0 21 24"><path d="M0 0h21v19h-7l-3 3-3-3H0z" fill="#fff" /><path d="M4 5h13M4 9h13M4 13h8" stroke="#333" strokeWidth="1.200" /></svg>
      </div>
    </div>
  );
}

function Overlays() {
  return (
    <>
      <svg className="absolute left-0 top-0 pointer-events-none" width="1920" height="1080" viewBox="0 0 1920 1080">
        <path d="M57 824L492 991l5-1 12 16-27-1 4-2.500L56 826z" fill="#f8181c" />
        <g opacity=".88">
          <path d="M1673 985l36 20-36 21-35-21z" fill="#d2ecfa" />
          <path d="M1673 985l36 20v24l-26-20z" fill="#8fd6f9" />
          <path d="M1638 1005l35-8 5 16-40 16z" fill="#bfe4f7" />
          <path d="M1638 1025l36-12 35 16v17l-36 21-35-21z" fill="#2189c9" />
          <path d="M1655 1022l18 44 10-2 26-20-10-12-18 12-12-10z" fill="#15709f" />
          <path d="M1673 1029l-17-12v-13l17-10 17 10-1 5-16-9-10 7 10 6 10 6z" fill="#f2fafe" opacity=".8" />
        </g>
      </svg>
      <div className="absolute left-[1722px] top-[993px] text-[30px] leading-[30px] text-white/60 tracking-[8px] font-['Noto_Sans_CJK_SC',sans-serif] font-bold whitespace-nowrap">3D世界网</div>
      <div className="absolute left-[1719px] top-[1044px] text-[14px] leading-[10px] tracking-[3.700px] text-[#9aa0a0]/80 font-['Liberation_Sans',sans-serif] font-bold whitespace-nowrap">WWW.3DSJW.COM</div>
    </>
  );
}

export default function App() {
  return (
    <div className="relative w-[1920px] h-[1080px] overflow-hidden flex flex-col bg-[#6b6b6b]">
      <TitleBar />
      <Toolbars />
      <div className="h-[845px] flex shrink-0">
        <div className="w-[1888px] h-full flex flex-col shrink-0">
          <div className="h-[2px] bg-[#a8a8a8] shrink-0" />
          <div className="h-[818px] flex shrink-0"><Canvas /><VScroll /></div>
          <TabBar />
          <div className="h-[6px] shrink-0" />
        </div>
        <Dock />
      </div>
      <Command />
      <Status />
      <Taskbar />
      <Overlays />
    </div>
  );
}
